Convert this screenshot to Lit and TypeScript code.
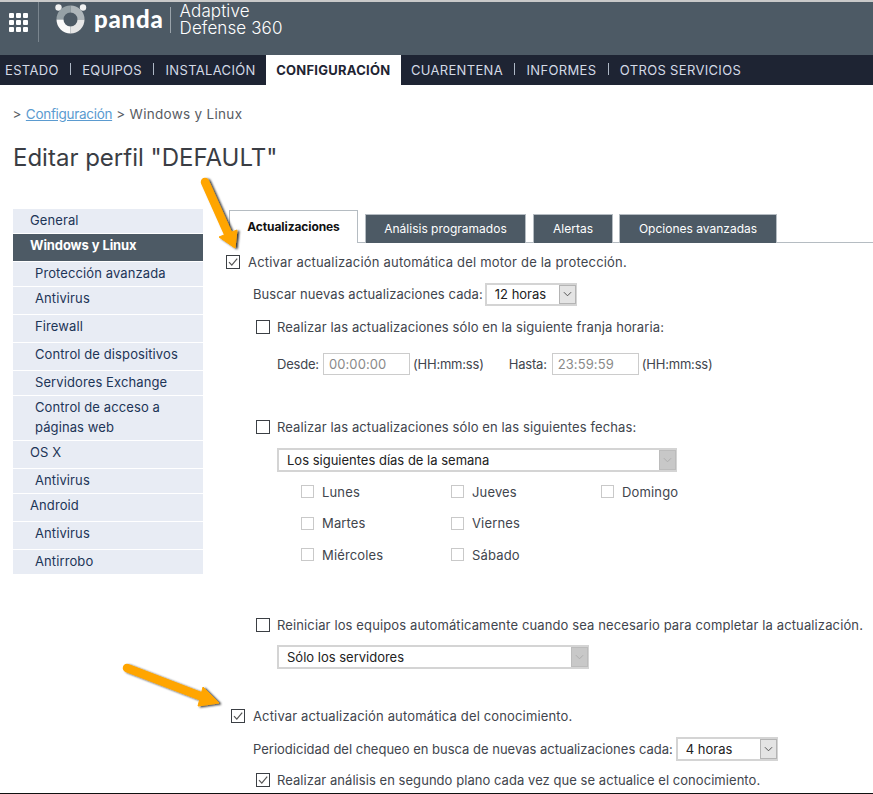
import { LitElement, html, css, svg } from "lit";
import { customElement } from "lit/decorators.js";

const check = html`<svg class="tick" viewBox="0 0 14 14" width="14" height="14"><path d="M3 7.2 5.8 10.2 11.2 3.6" fill="none" stroke="#555" stroke-width="1.2"/></svg>`;
const chevron = html`<svg viewBox="0 0 10 6" width="9" height="6"><path d="M1 1l4 4 4-4" fill="none" stroke="currentColor" stroke-width="1"/></svg>`;

const side: [string, string, number][] = [
  ["General", "top", 24], ["Windows y Linux", "active", 27], ["Protección avanzada", "sub", 24],
  ["Antivirus", "sub", 27], ["Firewall", "sub", 27], ["Control de dispositivos", "sub", 27],
  ["Servidores Exchange", "sub", 24], ["Control de acceso a páginas web", "sub", 44], ["OS X", "top", 27],
  ["Antivirus", "sub", 24], ["Android", "top", 27], ["Antivirus", "sub", 27], ["Antirrobo", "sub", 24],
];

@customElement("app-root")
export class AppRoot extends LitElement {
  static styles = css`
    :host { display: block; position: relative; height: 794px; overflow: hidden; background: #fff; font-family: "Inter", "Open Sans", sans-serif; font-size: 13px; color: #41454d; box-sizing: border-box; border-bottom: 1px solid #111; }
    * { box-sizing: border-box; }
    .header { height: 55px; background: #4d5a65; border-top: 2px solid #c9c9c9; display: flex; align-items: flex-start; color: #fff; }
    .apps { width: 39px; height: 40px; border-right: 1px solid #7a858e; padding: 11px 0 0 9px; }
    .apps-grid { display: grid; grid-template-columns: repeat(3, 5px); grid-auto-rows: 5px; gap: 2px; }
    .apps-grid i { background: #fff; border-radius: 1px; }
    .logo { margin-left: 16px; display: block; }
    .brand { font: 900 24px/30px "Lato", sans-serif; margin-left: 7px; margin-top: 2px; letter-spacing: .8px; }
    .product { margin-left: 6px; margin-top: 5px; padding-left: 9px; border-left: 1px solid #9aa3aa; height: 26px; }
    .product div { font: 300 17px/17px "Inter", sans-serif; letter-spacing: .1px; white-space: nowrap; }
    .product div:first-child { margin-top: -4px; }
    .nav { height: 30px; background: #1e2433; display: flex; align-items: stretch; color: #d4dae6; font-size: 13px; letter-spacing: .33px; }
    .nav a { display: flex; align-items: center; white-space: nowrap; }
    .nav .sep { width: 1px; height: 12px; background: #aeb8c6; margin: 8px 11.25px 0; }
    .nav .first { padding-left: 5px; }
    .nav .cur { background: #fff; color: #1e2433; font-weight: 700; padding: 0 10.5px; margin: 0 10px; letter-spacing: .25px; }
    .crumb { padding: 20px 0 0 12.5px; line-height: 18px; font-size: 13.5px; color: #585c63; letter-spacing: .3px; }
    .crumb a { color: #5b9bd0; text-decoration: underline; letter-spacing: -.3px; }
    h1 { font-weight: 400; font-size: 24px; line-height: 30px; margin: 20px 0 0 13px; color: #3a3d44; }
    .main { display: flex; align-items: flex-start; margin-top: 36px; }
    .sidebar { width: 190px; margin-left: 13px; display: flex; flex-direction: column; gap: 1px; color: #1d3557; }
    .sidebar div { background: #e8ecf4; padding: 1px 0 0 17px; letter-spacing: .1px; line-height: 20px; }
    .sidebar .sub { padding-left: 22px; }
    .sidebar .active { background: #4d5a65; color: #fff; font-weight: 700; letter-spacing: -.1px; }
    .content { flex: 1; margin-left: 23px; min-width: 0; }
    .tabs { display: flex; align-items: flex-end; height: 33px; margin: 1px 0 0 3px; border-bottom: 1px solid #b5bcc2; font-size: 12px; }
    .tab { height: 29px; background: #4d5a65; color: #fff; border: 1px solid #b5bcc2; border-bottom: 0; display: flex; align-items: center; justify-content: center; margin-left: 6px; margin-bottom: -1px; padding-bottom: 2px; }
    .tab.on { height: 33px; margin: 0 0 -1px 0; background: #fff; color: #111; font-weight: 700; padding: 0 0 2px; letter-spacing: -.1px; }
    .tab.t2 { margin-left: 7px; }
    .tab.t3 { margin-left: 7px; }
    .row { display: flex; align-items: center; height: 22px; white-space: nowrap; letter-spacing: .11px; }
    .box { width: 14px; height: 14px; border: 1px solid #3b3f44; flex: none; display: block; }
    .box .tick { display: block; margin: -1px; }
    .box.light { width: 13px; height: 13px; border-color: #c9c9c9; }
    .select { display: flex; align-items: center; height: 24px; border: 2px solid #d4d4d4; background: #fff; color: #222; padding-left: 8px; }
    .select span { flex: 1; }
    .select b { width: 17px; align-self: stretch; background: #e4e4e4; border: 1px solid #b4b4b4; color: #444; display: flex; align-items: center; justify-content: center; margin-right: -1px; }
    .select.off b { background: #c8c8c8; border-color: #bcbcbc; color: #aaa; }
    .input { height: 22px; width: 87px; border: 1px solid #ccc; color: #8a8a8a; padding-left: 5px; display: flex; align-items: center; margin: 0 4px; letter-spacing: .1px; }
    .input.a { margin-right: 3px; }
    .r1 { margin-top: 8px; letter-spacing: .19px; }
    .r1 .box { margin-right: 8px; }
    .r2 { margin: 10px 0 0 27px; letter-spacing: .08px; }
    .r2 .select { margin-left: 2px; width: 92px; height: 23px; letter-spacing: 0; }
    .r3, .r6, .r9, .r12 { padding-left: 30px; }
    .r3 .box, .r6 .box, .r9 .box, .r12 .box { margin-right: 7px; }
    .r3 { margin-top: 11px; }
    .r4 { margin: 15px 0 0 51px; letter-spacing: -.2px; }
    .r4 .hasta { margin-left: 25px; margin-right: 1px; }
    .r6 { margin-top: 41px; }
    .wide { margin: 10px 0 0 51px; width: 400px; }
    .wide.s { width: 312px; margin-top: 9px; }
    .days { display: grid; grid-template-columns: 150px 150px auto; margin: 4px 0 0 75px; width: 400px; grid-auto-rows: 31.5px; letter-spacing: .15px; }
    .days label { display: flex; align-items: center; gap: 8px; }
    .r9 { margin-top: 43px; letter-spacing: .125px; }
    .r10 { margin-top: 36px; padding-left: 5px; letter-spacing: .15px; }
    .r10 .box { margin-right: 8px; }
    .r11 { margin: 11px 0 0 27px; letter-spacing: 0; }
    .r11 .select { margin-left: 3px; width: 102px; }
    .r12 { margin-top: 9px; letter-spacing: .05px; }
    .overlay { position: absolute; left: 0; top: 0; pointer-events: none; }
  `;

  private nav(labels: string[]) {
    return labels.map((l, i) => html`${i ? html`<span class="sep"></span>` : ""}<a>${l}</a>`);
  }

  render() {
    const days = ["Lunes", "Jueves", "Domingo", "Martes", "Viernes", "", "Miércoles", "Sábado", ""];
    return html`
      <div class="header">
        <div class="apps"><div class="apps-grid">${Array.from({ length: 9 }, () => html`<i></i>`)}</div></div>
        <svg class="logo" width="32" height="34" viewBox="0 0 32 34">
          <circle cx="3.5" cy="5.5" r="3.2" fill="#f2f2f2"/><circle cx="28" cy="5.5" r="3.2" fill="#f2f2f2"/>
          <path d="M15.5 3.5a14 14 0 0 0-14 14h7a7 7 0 0 1 7-7z" fill="#96a1a6"/>
          <path d="M15.5 3.5a14 14 0 0 1 14 14h-7a7 7 0 0 0-7-7z" fill="#aeb6ba"/>
          <path d="M1.5 17.5a14 14 0 0 0 14 14v-7a7 7 0 0 1-7-7z" fill="#fafafa"/>
          <path d="M29.5 17.5a14 14 0 0 1-14 14v-7a7 7 0 0 0 7-7z" fill="#e6e6e6"/>
        </svg>
        <div class="brand">panda</div>
        <div class="product"><div>Adaptive</div><div>Defense 360</div></div>
      </div>
      <div class="nav">
        <span class="first"></span>${this.nav(["ESTADO", "EQUIPOS", "INSTALACIÓN"])}
        <a class="cur">CONFIGURACIÓN</a>
        ${this.nav(["CUARENTENA", "INFORMES", "OTROS SERVICIOS"])}
      </div>
      <div class="crumb">&gt; <a>Configuración</a> &gt; Windows y Linux</div>
      <h1>Editar perfil "DEFAULT"</h1>
      <div class="main">
        <div class="sidebar">
          ${side.map(([t, c, h]) => html`<div class=${c} style="height:${h}px">${t}</div>`)}
        </div>
        <div class="content">
          <div class="tabs">
            <div class="tab on" style="width:129px">Actualizaciones</div>
            <div class="tab t2" style="width:161px">Análisis programados</div>
            <div class="tab t3" style="width:80px">Alertas</div>
            <div class="tab" style="width:158px">Opciones avanzadas</div>
          </div>
          <div class="row r1"><span class="box">${check}</span>Activar actualización automática del motor de la protección.</div>
          <div class="row r2">Buscar nuevas actualizaciones cada: <div class="select"><span>12 horas</span><b>${chevron}</b></div></div>
          <div class="row r3"><span class="box"></span>Realizar las actualizaciones sólo en la siguiente franja horaria:</div>
          <div class="row r4">Desde:<div class="input a">00:00:00</div>(HH:mm:ss)<span class="hasta">Hasta:</span><div class="input a">23:59:59</div>(HH:mm:ss)</div>
          <div class="row r6"><span class="box"></span>Realizar las actualizaciones sólo en las siguientes fechas:</div>
          <div class="select off wide"><span>Los siguientes días de la semana</span><b>${chevron}</b></div>
          <div class="days">
            ${days.map((d) => d ? html`<label><span class="box light"></span>${d}</label>` : html`<span></span>`)}
          </div>
          <div class="row r9"><span class="box"></span>Reiniciar los equipos automáticamente cuando sea necesario para completar la actualización.</div>
          <div class="select off wide s"><span>Sólo los servidores</span><b>${chevron}</b></div>
          <div class="row r10"><span class="box">${check}</span>Activar actualización automática del conocimiento.</div>
          <div class="row r11">Periodicidad del chequeo en busca de nuevas actualizaciones cada: <div class="select"><span>4 horas</span><b>${chevron}</b></div></div>
          <div class="row r12"><span class="box">${check}</span>Realizar análisis en segundo plano cada vez que se actualice el conocimiento.</div>
        </div>
      </div>
      <svg class="overlay" width="873" height="794">
        <defs><filter id="s" x="-30%" y="-30%" width="160%" height="160%"><feDropShadow dx="2" dy="1" stdDeviation="1.2" flood-color="#000" flood-opacity=".8"/></filter></defs>
        ${svg`<g filter="url(#s)" fill="#ffa500">
          <path d="M205 182 L230 238" stroke="#ffa500" stroke-width="8.5" stroke-linecap="round"/>
          <path d="M219 237 L237 230 L235 248 Z" stroke="#ffa500" stroke-width="1" stroke-linejoin="round"/>
          <path d="M127 668 L208 699" stroke="#ffa500" stroke-width="8.5" stroke-linecap="round"/>
          <path d="M203 687 L219 703 L198 706 Z" stroke="#ffa500" stroke-width="1" stroke-linejoin="round"/>
        </g>`}
      </svg>
    `;
  }
}
